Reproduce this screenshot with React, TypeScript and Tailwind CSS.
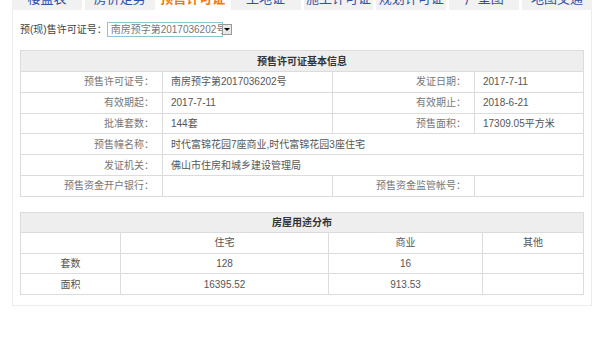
export default function App() {
  const tabs = ["楼盘表", "房价走势", "预售许可证", "土地证", "施工许可证", "规划许可证", "户型图", "地图交通"]

  const info = [
    ["预售许可证号：", "南房预字第2017036202号", "发证日期：", "2017-7-11"],
    ["有效期起：", "2017-7-11", "有效期止：", "2018-6-21"],
    ["批准套数：", "144套", "预售面积：", "17309.05平方米"],
  ]

  const cell = "border border-[#dcdcdc] h-[20.8px] px-[8px]"

  return (
    <div
      className="w-[600px] h-[353px] bg-white overflow-hidden text-[10px] text-[#555]"
      style={{ fontFamily: '"Liberation Sans", "Noto Sans CJK SC", sans-serif' }}
    >
      {/* Tabs */}
      <div className="flex gap-[3px] ml-[12px] w-[580px] mt-[-17px] h-[27px]">
        {tabs.map((t, i) => (
          <div
            key={t}
            className={
              "flex-1 text-center text-[13px] leading-[14px] pt-[9px] " +
              (i === 2 ? "bg-white text-[#f07a10] font-bold" : "bg-[#f1f1f1] text-[#2f52a6]")
            }
          >
            {t}
          </div>
        ))}
      </div>

      {/* Panel */}
      <div className="ml-[12px] w-[580px] border border-t-0 border-[#ececec] pb-[10px]">
        <div className="flex items-center pl-[7px] pt-[12px] h-[26px] text-[10px] text-[#444]">
          <span>预(现)售许可证号：</span>
          <div className="flex items-center h-[15px]">
            <div className="w-[116px] h-[15px] border border-[#8fc3d3] bg-white text-[#777] text-[10px] leading-[13px] pl-[3px] overflow-hidden whitespace-nowrap">
              南房预字第2017036202号
            </div>
            <div className="w-[10px] h-[11px] border border-[#999] bg-[#e8e8e8] flex items-center justify-center ml-[-1px]">
              <div className="w-0 h-0 border-l-[3px] border-r-[3px] border-t-[3px] border-l-transparent border-r-transparent border-t-black" />
            </div>
          </div>
        </div>

        {/* Basic info */}
        <table className="ml-[7px] mt-[14px] w-[564px] border-collapse">
          <colgroup>
            <col className="w-[142px]" />
            <col className="w-[170px]" />
            <col className="w-[142px]" />
            <col />
          </colgroup>
          <tbody>
            <tr>
              <td colSpan={4} className="border border-[#dcdcdc] h-[21px] bg-[#eeeeee] text-center font-bold text-[#333]">
                预售许可证基本信息
              </td>
            </tr>
            {info.map((r) => (
              <tr key={r[0]}>
                <td className={cell + " text-right text-[#777]"}>{r[0]}</td>
                <td className={cell}>{r[1]}</td>
                <td className={cell + " text-right text-[#777]"}>{r[2]}</td>
                <td className={cell}>{r[3]}</td>
              </tr>
            ))}
            <tr>
              <td className={cell + " text-right text-[#777]"}>预售幢名称：</td>
              <td colSpan={3} className={cell}>时代富锦花园7座商业,时代富锦花园3座住宅</td>
            </tr>
            <tr>
              <td className={cell + " text-right text-[#777]"}>发证机关：</td>
              <td colSpan={3} className={cell}>佛山市住房和城乡建设管理局</td>
            </tr>
            <tr>
              <td className={cell + " text-right text-[#777]"}>预售资金开户银行：</td>
              <td className={cell}></td>
              <td className={cell + " text-right text-[#777]"}>预售资金监管帐号：</td>
              <td className={cell}></td>
            </tr>
          </tbody>
        </table>

        {/* Usage distribution */}
        <table className="ml-[7px] mt-[15px] w-[564px] border-collapse text-center">
          <colgroup>
            <col className="w-[100px]" />
            <col className="w-[208px]" />
            <col className="w-[154px]" />
            <col />
          </colgroup>
          <tbody>
            <tr>
              <td colSpan={4} className="border border-[#dcdcdc] h-[20px] bg-[#eeeeee] font-bold text-[#333]">
                房屋用途分布
              </td>
            </tr>
            <tr>
              <td className={cell}></td>
              <td className={cell}>住宅</td>
              <td className={cell}>商业</td>
              <td className={cell}>其他</td>
            </tr>
            <tr>
              <td className={cell}>套数</td>
              <td className={cell}>128</td>
              <td className={cell}>16</td>
              <td className={cell}></td>
            </tr>
            <tr>
              <td className={cell}>面积</td>
              <td className={cell}>16395.52</td>
              <td className={cell}>913.53</td>
              <td className={cell}></td>
            </tr>
          </tbody>
        </table>
      </div>
    </div>
  )
}
